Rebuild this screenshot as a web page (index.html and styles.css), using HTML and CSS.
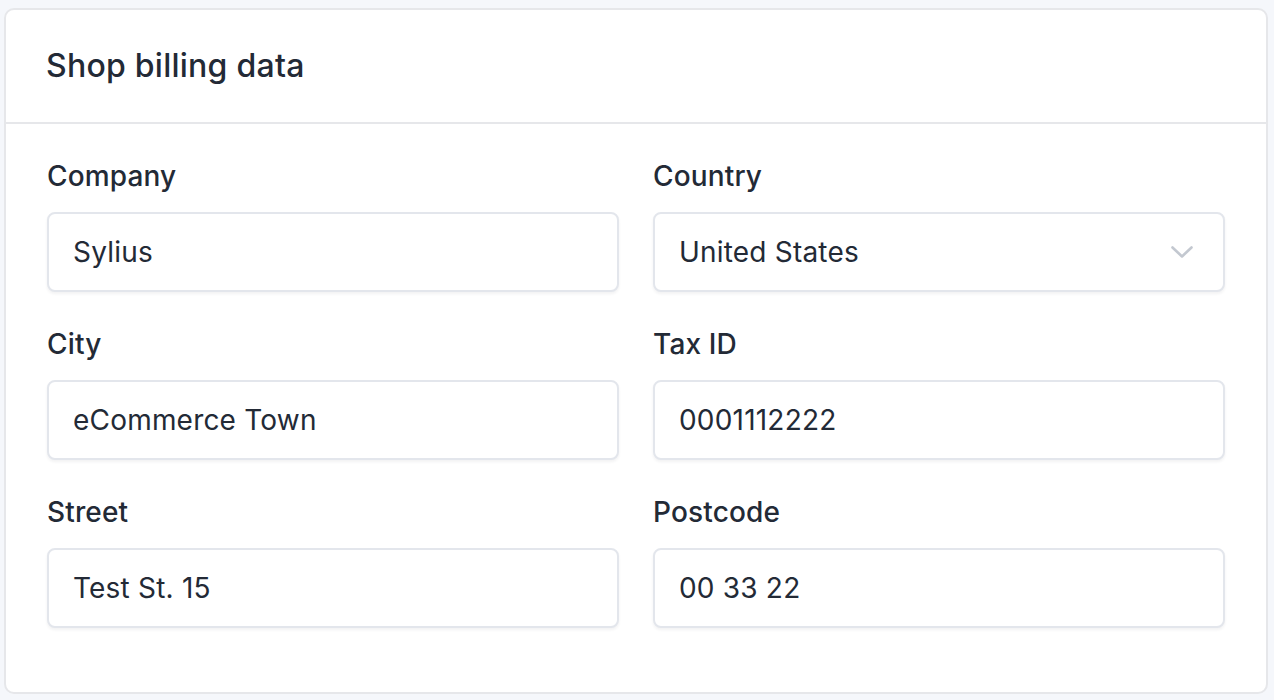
FILE: index.html
```html
<!DOCTYPE html>
<html lang="en">
<head>
<meta charset="utf-8">
<title>Shop billing data</title>
<link rel="stylesheet" href="styles.css">
</head>
<body>
<div class="card">
  <div class="card-header">
    <h3 class="card-title">Shop billing data</h3>
  </div>
  <div class="card-body">
    <div class="grid">
      <div class="field">
        <label class="label">Company</label>
        <div class="control">Sylius</div>
      </div>
      <div class="field">
        <label class="label">Country</label>
        <div class="control select">
          <span>United States</span>
          <svg class="chev" width="22" height="12" viewBox="0 0 22 12"><path d="M1.5 1.5 L11 10.5 L20.5 1.5" fill="none" stroke="#c3c8d0" stroke-width="2.6" stroke-linecap="round" stroke-linejoin="round"/></svg>
        </div>
      </div>
      <div class="field">
        <label class="label">City</label>
        <div class="control">eCommerce Town</div>
      </div>
      <div class="field">
        <label class="label">Tax ID</label>
        <div class="control">0001112222</div>
      </div>
      <div class="field">
        <label class="label">Street</label>
        <div class="control">Test St. 15</div>
      </div>
      <div class="field">
        <label class="label">Postcode</label>
        <div class="control">00 33 22</div>
      </div>
    </div>
  </div>
</div>
</body>
</html>
```

FILE: styles.css
```css
html, body {
  margin: 0;
  padding: 0;
  background: #f5f7fb;
}
body {
  padding: 8px 6px 6px 4px;
  font-family: Inter, "Noto Sans", "Liberation Sans", sans-serif;
  color: #232a36;
}
.card {
  background: #ffffff;
  border: 2px solid #e6e7ea;
  border-radius: 10px;
  height: 686px;
  box-sizing: border-box;
}
.card-header {
  padding: 32px 40px;
  border-bottom: 2px solid #e6e7ea;
}
.card-title {
  margin: 0;
  font-size: 32px;
  line-height: 48px;
  font-weight: 500;
  letter-spacing: 0.25px;
  color: #232a36;
}
.card-body {
  padding: 32px 41px;
}
.grid {
  display: grid;
  grid-template-columns: 1fr 1fr;
  column-gap: 34px;
  row-gap: 32px;
}
.field {
  display: flex;
  flex-direction: column;
}
.label {
  font-size: 28px;
  line-height: 40px;
  font-weight: 500;
  letter-spacing: 0.15px;
  margin-bottom: 16px;
}
.control {
  height: 80px;
  box-sizing: border-box;
  border: 2px solid #e3e6ec;
  border-radius: 8px;
  padding: 18px 24px;
  font-size: 28px;
  line-height: 40px;
  font-weight: 400;
  letter-spacing: 0.2px;
  color: #232a36;
  background: #fff;
  box-shadow: 0 2px 3px rgba(29, 39, 59, 0.06);
}
.select {
  display: flex;
  align-items: center;
  justify-content: space-between;
  padding-right: 30px;
}
.chev {
  display: block;
}
```
